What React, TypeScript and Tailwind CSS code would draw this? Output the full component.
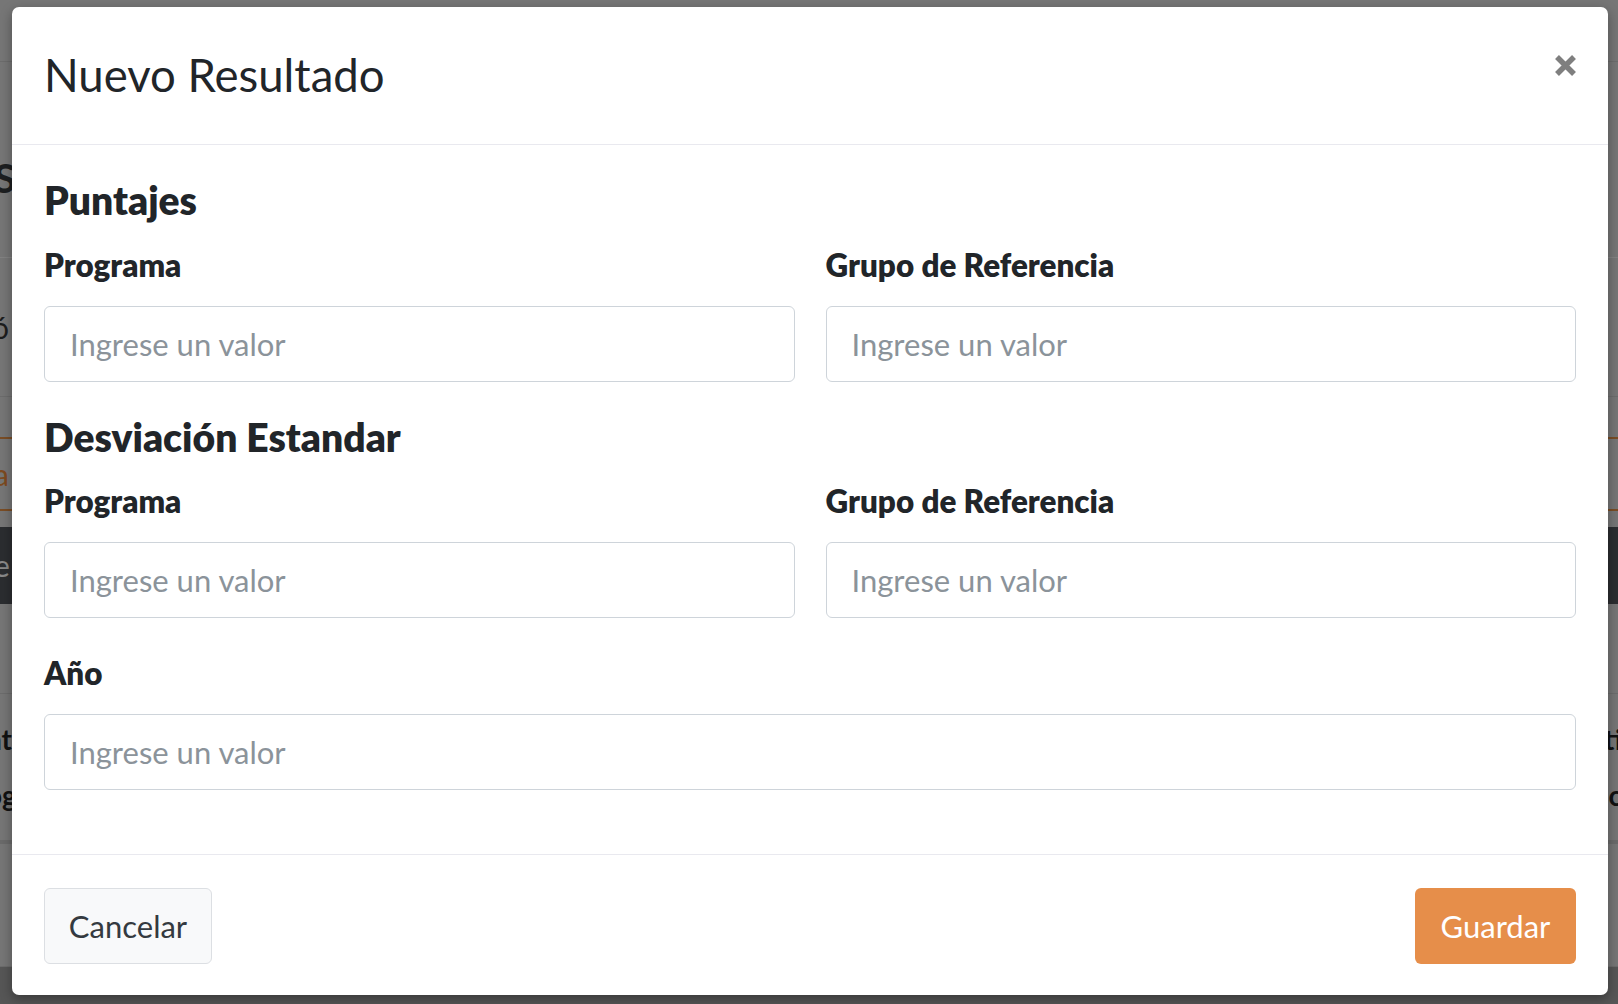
import React from 'react';

const Field: React.FC<{ label: string }> = ({ label }) => (
  <div className="flex flex-col">
    <label className="text-[31.4px] leading-[40px] font-extrabold text-[#212529] mb-[21px]">{label}</label>
    <input
      type="text"
      placeholder="Ingrese un valor"
      className="h-[76px] w-full rounded-[6px] border border-[#ced4da] bg-white px-[25px] text-[31px] text-[#495057] outline-none placeholder:text-[#8b939a]"
    />
  </div>
);

const Backdrop: React.FC = () => (
  <div className="flex flex-col h-full w-full bg-[#767676] text-[#1b1b1b]">
    <div className="h-[62px] border-b border-[#6c6c6c]" />
    <div className="h-[196px] border-b border-[#828282] pt-[92px] pl-0">
      <span className="-ml-[6px] text-[40px] font-bold leading-[48px] text-[#1d1f21]">S</span>
    </div>
    <div className="h-[139px] border-b border-[#6c6c6c] flex items-center justify-between">
      <span className="-ml-[8px] text-[30px] text-[#1d1d1d]">ó</span>
    </div>
    <div className="h-[40px]" />
    <div className="h-[74px] border-y-2 border-[#7a4d25] flex items-center">
      <span className="-ml-[6px] text-[30px] text-[#7d4a1f]">a</span>
    </div>
    <div className="h-[16px]" />
    <div className="h-[77px] bg-[#2b2d30] flex items-center">
      <span className="-ml-[6px] text-[30px] text-[#8a8a8a]">e</span>
    </div>
    <div className="h-[90px] border-b border-[#6c6c6c]" />
    <div className="h-[150px] border-b-4 border-[#6a6a6a] flex flex-col justify-center">
      <div className="flex justify-between text-[28px] font-bold leading-[56px] text-[#111]">
        <span className="-ml-[14px]">nt</span>
        <span className="-mr-[4px]">ti</span>
      </div>
      <div className="flex justify-between text-[28px] font-bold leading-[56px] text-[#111]">
        <span className="-ml-[14px]">og</span>
        <span className="-mr-[4px]">c</span>
      </div>
    </div>
    <div className="h-[123px] border-b border-[#6c6c6c]" />
    <div className="flex-1 bg-[#565656]" />
  </div>
);

const CloseIcon: React.FC = () => (
  <svg width="23" height="23" viewBox="0 0 23 23" className="mt-[7px] shrink-0">
    <path d="M3 3 L20 20 M20 3 L3 20" stroke="#7f7f7f" strokeWidth="5.5" strokeLinecap="butt" />
  </svg>
);

export default function App() {
  return (
    <div className="relative h-[1004px] w-full overflow-hidden [font-family:Lato,sans-serif]">
      <Backdrop />
      <div className="absolute left-[12px] top-[7px] flex h-[988px] w-[1596px] flex-col rounded-[7px] bg-white shadow-[0_4px_12px_rgba(0,0,0,0.35)]">
        {/* header */}
        <div className="flex h-[138px] items-start justify-between border-b border-[#e9e9ef] pl-[32px] pr-[31px] pt-[40px]">
          <h5 className="text-[45.5px] leading-[56px] font-normal text-[#212529]">Nuevo Resultado</h5>
          <CloseIcon />
        </div>

        {/* body */}
        <div className="flex-1 px-[32px] pt-[31px]">
          <h4 className="text-[39px] leading-[48px] font-extrabold text-[#212529] mb-[21px]">Puntajes</h4>
          <div className="grid grid-cols-2 gap-x-[31px]">
            <Field label="Programa" />
            <Field label="Grupo de Referencia" />
          </div>

          <h4 className="mt-[31px] text-[39px] leading-[48px] font-extrabold text-[#212529] mb-[20px]">Desviación Estandar</h4>
          <div className="grid grid-cols-2 gap-x-[31px]">
            <Field label="Programa" />
            <Field label="Grupo de Referencia" />
          </div>

          <div className="mt-[35px]">
            <Field label="Año" />
          </div>
        </div>

        {/* footer */}
        <div className="flex items-center justify-between border-t border-[#e9e9ef] px-[32px] pt-[33px] pb-[31px]">
          <button className="h-[76px] w-[168px] rounded-[6px] border border-[#dcdfe3] bg-[#f8f9fa] text-[31px] text-[#343a40]">
            Cancelar
          </button>
          <button className="h-[76px] w-[161px] rounded-[6px] bg-[#e68e4a] text-[31px] text-white">
            Guardar
          </button>
        </div>
      </div>
    </div>
  );
}
